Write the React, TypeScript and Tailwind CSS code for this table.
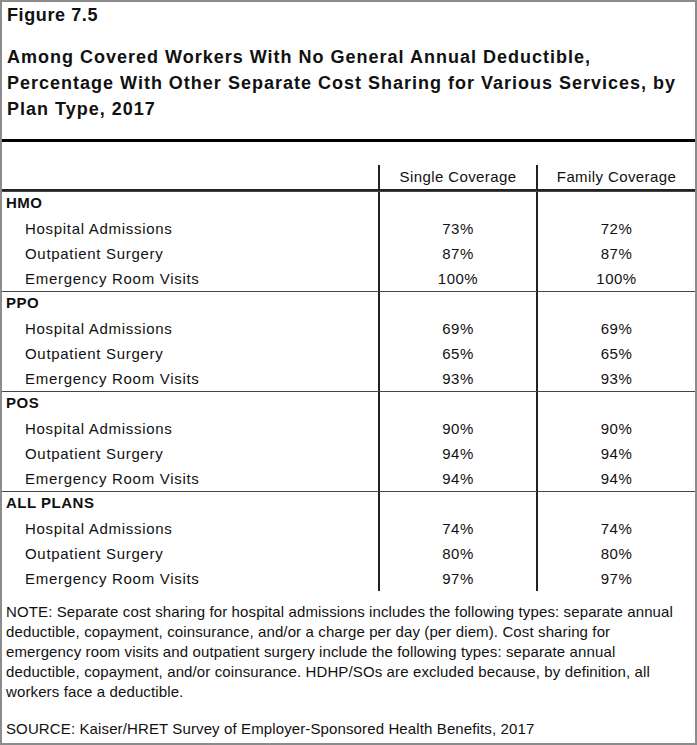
import React from 'react';

interface Row {
  label: string;
  single: string;
  family: string;
}

interface Group {
  name: string;
  rows: Row[];
}

const groups: Group[] = [
  {
    name: 'HMO',
    rows: [
      { label: 'Hospital Admissions', single: '73%', family: '72%' },
      { label: 'Outpatient Surgery', single: '87%', family: '87%' },
      { label: 'Emergency Room Visits', single: '100%', family: '100%' },
    ],
  },
  {
    name: 'PPO',
    rows: [
      { label: 'Hospital Admissions', single: '69%', family: '69%' },
      { label: 'Outpatient Surgery', single: '65%', family: '65%' },
      { label: 'Emergency Room Visits', single: '93%', family: '93%' },
    ],
  },
  {
    name: 'POS',
    rows: [
      { label: 'Hospital Admissions', single: '90%', family: '90%' },
      { label: 'Outpatient Surgery', single: '94%', family: '94%' },
      { label: 'Emergency Room Visits', single: '94%', family: '94%' },
    ],
  },
  {
    name: 'ALL PLANS',
    rows: [
      { label: 'Hospital Admissions', single: '74%', family: '74%' },
      { label: 'Outpatient Surgery', single: '80%', family: '80%' },
      { label: 'Emergency Room Visits', single: '97%', family: '97%' },
    ],
  },
];

function GroupBlock({ group }: { group: Group }) {
  return (
    <div className="grid grid-cols-[376px_158px_1fr] border-t border-[#444]">
      <div>
        <div className="h-[24px] pl-[4px] font-bold leading-[21px] tracking-[0.5px]">{group.name}</div>
        {group.rows.map((r) => (
          <div key={r.label} className="h-[25px] pl-[23px] leading-[25px] tracking-[0.7px]">
            {r.label}
          </div>
        ))}
      </div>
      <div className="border-l-2 border-[#222]">
        <div className="h-[24px]" />
        {group.rows.map((r) => (
          <div key={r.label} className="h-[25px] text-center leading-[25px] tracking-[0.5px]">
            {r.single}
          </div>
        ))}
      </div>
      <div className="border-l-2 border-[#222]">
        <div className="h-[24px]" />
        {group.rows.map((r) => (
          <div key={r.label} className="h-[25px] text-center leading-[25px] tracking-[0.5px]">
            {r.family}
          </div>
        ))}
      </div>
    </div>
  );
}

export default function App() {
  return (
    <div className="w-[697px] h-[745px] bg-white border-2 border-[#8c8c8c] text-[#111] font-['Liberation_Sans',Arial,sans-serif] overflow-hidden">
      {/* title */}
      <div className="pl-[5px] h-[137px]">
        <div className="text-[18px] font-bold leading-[26px] tracking-[0.6px]">Figure 7.5</div>
        <div className="mt-[16px] text-[18px] font-bold leading-[26px] tracking-[1px] whitespace-nowrap">
          Among Covered Workers With No General Annual Deductible,
          <br />
          Percentage With Other Separate Cost Sharing for Various Services, by
          <br />
          Plan Type, 2017
        </div>
      </div>
      <div className="h-[3px] bg-black" />

      {/* table */}
      <div className="text-[15px]">
        <div className="h-[23px]" />
        <div className="grid grid-cols-[376px_158px_1fr] h-[26px] border-b-2 border-[#222]">
          <div />
          <div className="border-l-2 border-[#222] text-center leading-[24px] tracking-[0.4px]">Single Coverage</div>
          <div className="border-l-2 border-[#222] text-center leading-[24px] tracking-[0.4px]">Family Coverage</div>
        </div>
        {groups.map((g) => (
          <GroupBlock key={g.name} group={g} />
        ))}
      </div>

      {/* notes */}
      <div className="px-[4px] pt-[11px] text-[15px] leading-[20px] tracking-[0.12px] whitespace-nowrap">
        <p>
          NOTE: Separate cost sharing for hospital admissions includes the following types: separate annual
          <br />
          deductible, copayment, coinsurance, and/or a charge per day (per diem). Cost sharing for
          <br />
          emergency room visits and outpatient surgery include the following types: separate annual
          <br />
          deductible, copayment, and/or coinsurance. HDHP/SOs are excluded because, by definition, all
          <br />
          workers face a deductible.
        </p>
        <p className="mt-[17px]">SOURCE: Kaiser/HRET Survey of Employer-Sponsored Health Benefits, 2017</p>
      </div>
    </div>
  );
}
